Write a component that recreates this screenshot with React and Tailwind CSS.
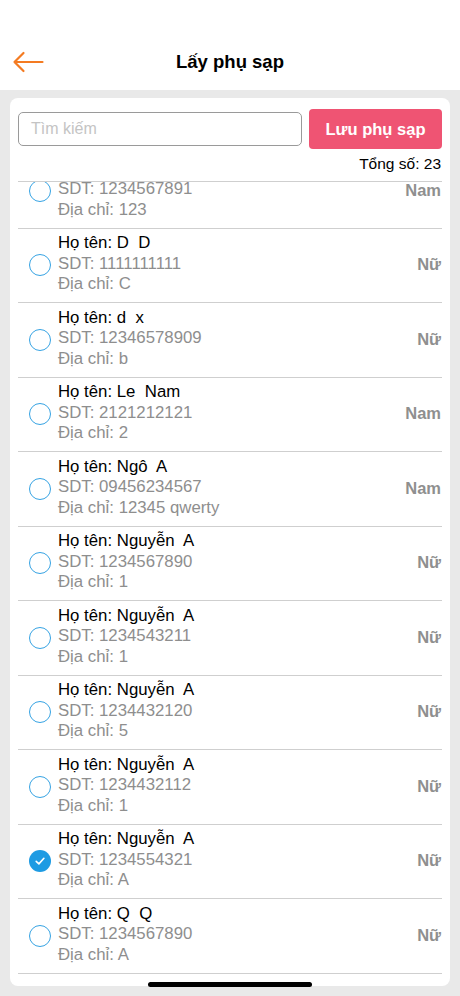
import React from "react";

const items = [
  { name: "Họ tên: B  B", phone: "1234567891", addr: "123", g: "Nam" },
  { name: "Họ tên: D  D", phone: "1111111111", addr: "C", g: "Nữ" },
  { name: "Họ tên: d  x", phone: "12346578909", addr: "b", g: "Nữ" },
  { name: "Họ tên: Le  Nam", phone: "2121212121", addr: "2", g: "Nam" },
  { name: "Họ tên: Ngô  A", phone: "09456234567", addr: "12345 qwerty", g: "Nam" },
  { name: "Họ tên: Nguyễn  A", phone: "1234567890", addr: "1", g: "Nữ" },
  { name: "Họ tên: Nguyễn  A", phone: "1234543211", addr: "1", g: "Nữ" },
  { name: "Họ tên: Nguyễn  A", phone: "1234432120", addr: "5", g: "Nữ" },
  { name: "Họ tên: Nguyễn  A", phone: "1234432112", addr: "1", g: "Nữ" },
  { name: "Họ tên: Nguyễn  A", phone: "1234554321", addr: "A", g: "Nữ", checked: true },
  { name: "Họ tên: Q  Q", phone: "1234567890", addr: "A", g: "Nữ" },
];

function Radio({ checked }) {
  if (checked) {
    return (
      <div className="w-[22px] h-[22px] rounded-full bg-[#1e9be3] flex items-center justify-center shrink-0">
        <svg width="12" height="12" viewBox="0 0 12 12" fill="none">
          <path d="M2.2 6.3 L4.9 8.9 L9.9 3.3" stroke="white" strokeWidth="1.6" strokeLinecap="round" strokeLinejoin="round" />
        </svg>
      </div>
    );
  }
  return <div className="w-[22px] h-[22px] rounded-full border-[1.5px] border-[#36a3e3] shrink-0" />;
}

export default function App() {
  return (
    <div
      className="w-[460px] h-[996px] bg-[#e9e9e9] flex flex-col relative overflow-hidden"
      style={{ fontFamily: '"Liberation Sans", Arial, sans-serif' }}
    >
      <header className="h-[90px] bg-white shrink-0 pt-[44px]">
        <div className="h-[36px] grid grid-cols-[60px_1fr_60px] items-center">
          <div className="pl-[12px] flex items-center">
            <svg width="32" height="22" viewBox="0 0 32 22" fill="none">
              <path d="M30.5 11 H2.5 M11.5 2 L2.5 11 L11.5 20" stroke="#f47b22" strokeWidth="2.2" strokeLinecap="round" strokeLinejoin="round" />
            </svg>
          </div>
          <h1 className="text-center text-[18.5px] font-bold text-black">Lấy phụ sạp</h1>
          <div />
        </div>
      </header>

      <div className="mx-[10px] mt-[8px] mb-[10px] flex-1 bg-white rounded-[8px] flex flex-col overflow-hidden px-[8px]">
        <div className="flex items-center gap-[7px] mt-[11px] h-[40px]">
          <div className="flex-1 h-[34px] border border-[#9a9a9a] rounded-[5px] flex items-center px-[12px]">
            <span className="text-[16px] text-[#c4c4c4]">Tìm kiếm</span>
          </div>
          <button className="w-[133px] h-[40px] rounded-[4px] bg-[#ef5473] text-white text-[16.5px] font-bold">
            Lưu phụ sạp
          </button>
        </div>
        <div className="text-right text-[15.5px] text-black leading-[20px] mt-[5px] pr-[1px]">Tổng số: 23</div>
        <div className="mt-[6.5px] border-t border-[#cfcfcf] flex-1 overflow-hidden">
          <div className="mt-[-27.5px]">
            {items.map((it, i) => (
              <div key={i} className="h-[74.5px] border-b border-[#cfcfcf] flex items-center pl-[11px] pr-[1px]">
                <Radio checked={it.checked} />
                <div className="flex-1 ml-[7px] pb-[3px] leading-[20.5px] text-[16.8px] whitespace-pre">
                  <div className="text-black">{it.name}</div>
                  <div className="text-[#8e8e8e]">SDT: {it.phone}</div>
                  <div className="text-[#8e8e8e]">Địa chỉ: {it.addr}</div>
                </div>
                <div className="text-[16.5px] font-semibold text-[#8f8f8f] pb-[1px]">{it.g}</div>
              </div>
            ))}
          </div>
        </div>
      </div>

      <div className="absolute left-[148px] bottom-[9px] w-[164px] h-[5.5px] rounded-full bg-black" />
    </div>
  );
}
